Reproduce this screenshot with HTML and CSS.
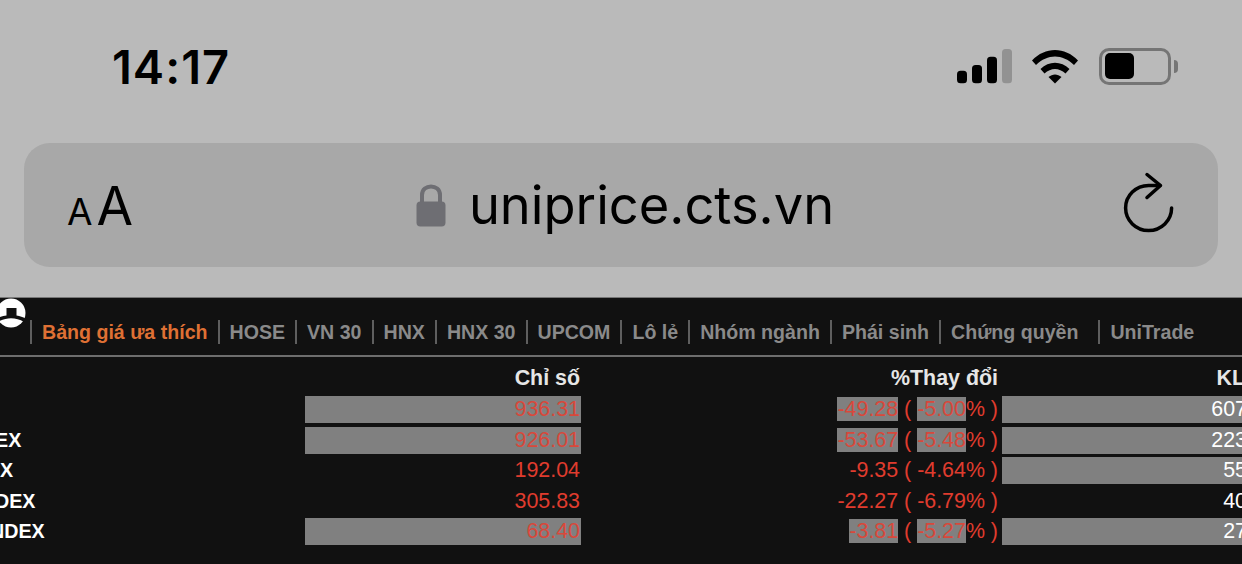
FILE: index.html
```html
<!DOCTYPE html>
<html lang="vi">
<head>
    <meta charset="UTF-8">
    <meta name="viewport" content="width=device-width, initial-scale=1.0">
    <title>uniprice.cts.vn</title>
    <link rel="stylesheet" href="styles.css">
</head>
<body>
    <div class="status-bar">
        <span class="clock">14:17</span>
        <div class="status-icons">
            <svg class="icon-signal" width="56" height="36" viewBox="0 0 56 36">
                <rect x="1" y="21.700" width="10" height="12.600" rx="3.500" fill="#000"/>
                <rect x="16" y="16" width="10" height="18.300" rx="3.500" fill="#000"/>
                <rect x="31" y="7.700" width="10" height="26.600" rx="3.500" fill="#000"/>
                <rect x="46" y="0" width="10" height="34.300" rx="3.500" fill="#929292"/>
            </svg>
            <svg class="icon-wifi" width="48" height="36" viewBox="0 0 48 36">
                <path d="M1 12.500 C14 -1.500 34 -1.500 47 12.500 L43 17 C31.500 5.500 16.500 5.500 5 17 Z" fill="#000"/>
                <path d="M9.500 21 C18 12.500 30 12.500 38.500 21 L34.500 25.500 C28 19.500 20 19.500 13.500 25.500 Z" fill="#000"/>
                <path d="M17.500 29 C21.500 25.500 26.500 25.500 30.500 29 L24 35.500 Z" fill="#000"/>
            </svg>
            <div class="battery">
                <div class="battery-body"><div class="battery-fill"></div></div>
                <div class="battery-tip"></div>
            </div>
        </div>
    </div>

    <div class="url-bar">
        <div class="text-size"><span class="a-small">A</span><span class="a-big">A</span></div>
        <div class="address">
            <svg class="icon-lock" width="30" height="44" viewBox="0 0 30 44">
                <path d="M6 19 V12 C6 0.500 24 0.500 24 12 V19" fill="none" stroke="#6e6e73" stroke-width="4"/>
                <rect x="0.500" y="18.500" width="29" height="25" rx="4" fill="#6e6e73"/>
            </svg>
            <span class="url">uniprice.cts.vn</span>
        </div>
        <svg class="icon-reload" width="52" height="62" viewBox="0 0 52 62">
            <path d="M49.600 36 A23 22.500 0 1 1 26.600 13.500 H38" fill="none" stroke="#000" stroke-width="3.500" stroke-linecap="round"/>
            <path d="M25 2.500 L38.500 13.500 L25 25.500" fill="none" stroke="#000" stroke-width="3.500" stroke-linecap="round" stroke-linejoin="round"/>
        </svg>
    </div>

    <div class="board">
        <div class="nav">
            <svg class="avatar" width="30" height="30" viewBox="0 0 30 30">
                <circle cx="15" cy="15" r="14.500" fill="#fff"/>
                <path d="M10.500 10 H20.500 V17.500 C24 18 27 19 29.500 20.500 L28 24 C20 19 10 19 2 24 L0.500 20.500 C3 19 7 18 10.500 17.500 Z" fill="#111"/>
            </svg>
            <a class="nav-item active">Bảng giá ưa thích</a>
            <a class="nav-item">HOSE</a>
            <a class="nav-item">VN 30</a>
            <a class="nav-item">HNX</a>
            <a class="nav-item">HNX 30</a>
            <a class="nav-item">UPCOM</a>
            <a class="nav-item">Lô lẻ</a>
            <a class="nav-item">Nhóm ngành</a>
            <a class="nav-item">Phái sinh</a>
            <a class="nav-item wide">Chứng quyền</a>
            <a class="nav-item">UniTrade</a>
        </div>

        <div class="table">
            <div class="row head">
                <div class="cell name"></div>
                <div class="cell index">Chỉ số</div>
                <div class="cell change">%Thay đổi</div>
                <div class="cell volume">KL</div>
            </div>
            <div class="row">
                <div class="cell name"></div>
                <div class="cell index flash">936.31</div>
                <div class="cell change"><span class="flash">-49.28</span> ( <span class="flash">-5.00</span>% )</div>
                <div class="cell volume flash">607</div>
            </div>
            <div class="row">
                <div class="cell name cut">EX</div>
                <div class="cell index flash">926.01</div>
                <div class="cell change"><span class="flash">-53.67</span> ( <span class="flash">-5.48</span>% )</div>
                <div class="cell volume flash">223</div>
            </div>
            <div class="row">
                <div class="cell name">X</div>
                <div class="cell index">192.04</div>
                <div class="cell change">-9.35 ( -4.64% )</div>
                <div class="cell volume flash">55</div>
            </div>
            <div class="row">
                <div class="cell name cut">DEX</div>
                <div class="cell index">305.83</div>
                <div class="cell change">-22.27 ( -6.79% )</div>
                <div class="cell volume">40</div>
            </div>
            <div class="row">
                <div class="cell name cut-more">NDEX</div>
                <div class="cell index flash">68.40</div>
                <div class="cell change"><span class="flash">-3.81</span> ( <span class="flash">-5.27</span>% )</div>
                <div class="cell volume flash">27</div>
            </div>
        </div>
    </div>
</body>
</html>
```

FILE: styles.css
```css
html, body {
    margin: 0;
    height: 564px;
    overflow: hidden;
}
body {
    background-color: #bababa;
    font-family: "Liberation Sans", Arial, sans-serif;
    display: flex;
    flex-direction: column;
}

/* phone status bar */
.status-bar {
    height: 143px;
    flex: none;
    display: flex;
    justify-content: space-between;
    align-items: flex-start;
    padding: 0 64px 0 112px;
    box-sizing: border-box;
}
.clock {
    font-family: Inter, sans-serif;
    font-weight: 600;
    font-size: 47px;
    letter-spacing: 1px;
    line-height: 56px;
    margin-top: 39px;
    color: #000;
}
.status-icons {
    display: flex;
    align-items: flex-start;
    margin-top: 48px;
}
.icon-signal {
    margin-top: 1px;
}
.icon-wifi {
    margin-left: 19px;
}
.battery {
    display: flex;
    align-items: center;
    margin-left: 20px;
}
.battery-body {
    width: 72px;
    height: 37px;
    box-sizing: border-box;
    border: 3px solid #757575;
    border-radius: 10px;
    padding: 2px 3px;
}
.battery-fill {
    width: 29px;
    height: 26px;
    background: #000;
    border-radius: 5px;
}
.battery-tip {
    width: 4px;
    height: 13px;
    margin-left: 3px;
    background: #757575;
    border-radius: 0 8px 8px 0;
}

/* safari address bar */
.url-bar {
    height: 124px;
    flex: none;
    margin: 0 24px;
    background-color: #a8a8a8;
    border-radius: 26px;
    display: flex;
    align-items: center;
    justify-content: space-between;
    padding: 0 44px 0 43px;
}
.text-size {
    color: #000;
    font-family: Inter, sans-serif;
    width: 66px;
    display: flex;
    align-items: baseline;
    margin-top: 2px;
}
.a-small {
    font-size: 37px;
}
.a-big {
    font-size: 53px;
    margin-left: 4px;
}
.address {
    display: flex;
    align-items: center;
    margin-right: 5px;
}
.icon-lock {
    margin-right: 23px;
}
.url {
    font-family: Inter, sans-serif;
    font-size: 52.400px;
    color: #000;
}
.icon-reload {
    margin-bottom: 4px;
}

/* price board */
.board {
    flex: 1;
    margin-top: 30px;
    background-color: #111;
    border-top: 1px solid #777;
}
.nav {
    height: 59px;
    box-sizing: border-box;
    border-bottom: 2px solid #6e6e6e;
    display: flex;
    align-items: center;
    padding-left: 30px;
    position: relative;
}
.avatar {
    position: absolute;
    left: -4.500px;
    top: 0;
}
.nav-item {
    font-weight: bold;
    font-size: 19.600px;
    color: #8a8a8a;
    border-left: 2px solid #5f5f5f;
    padding: 0 10px;
    line-height: 24px;
    margin-top: 10px;
    white-space: nowrap;
}
.nav-item.active {
    color: #df7034;
}
.nav-item.wide {
    padding-right: 20px;
}

.table {
    padding-top: 1.500px;
    width: 1247px;
}
.row {
    display: flex;
    height: 27px;
    margin-bottom: 3.500px;
    font-size: 21.400px;
    line-height: 27px;
    color: #e03c2e;
    text-align: right;
}
.row.head {
    height: 37.700px;
    margin-bottom: 0;
    line-height: 39px;
    font-weight: bold;
    color: #e6e6e6;
}
.name {
    width: 305px;
    flex: none;
    text-align: left;
    color: #fff;
    font-weight: bold;
    font-size: 19.700px;
}
.cut {
    text-indent: -5px;
}
.cut-more {
    text-indent: -10px;
}
.index {
    width: 276px;
    flex: none;
    box-sizing: border-box;
    padding-right: 1px;
}
.change {
    width: 418px;
    flex: none;
    box-sizing: border-box;
    padding-right: 1px;
}
.volume {
    flex: 1;
    margin-left: 3px;
    color: #fff;
}
.head .volume {
    color: #e6e6e6;
    padding-right: 2px;
}
.flash {
    background-color: #808080;
}
.index.flash, .change .flash {
    color: #d8483b;
}
```
